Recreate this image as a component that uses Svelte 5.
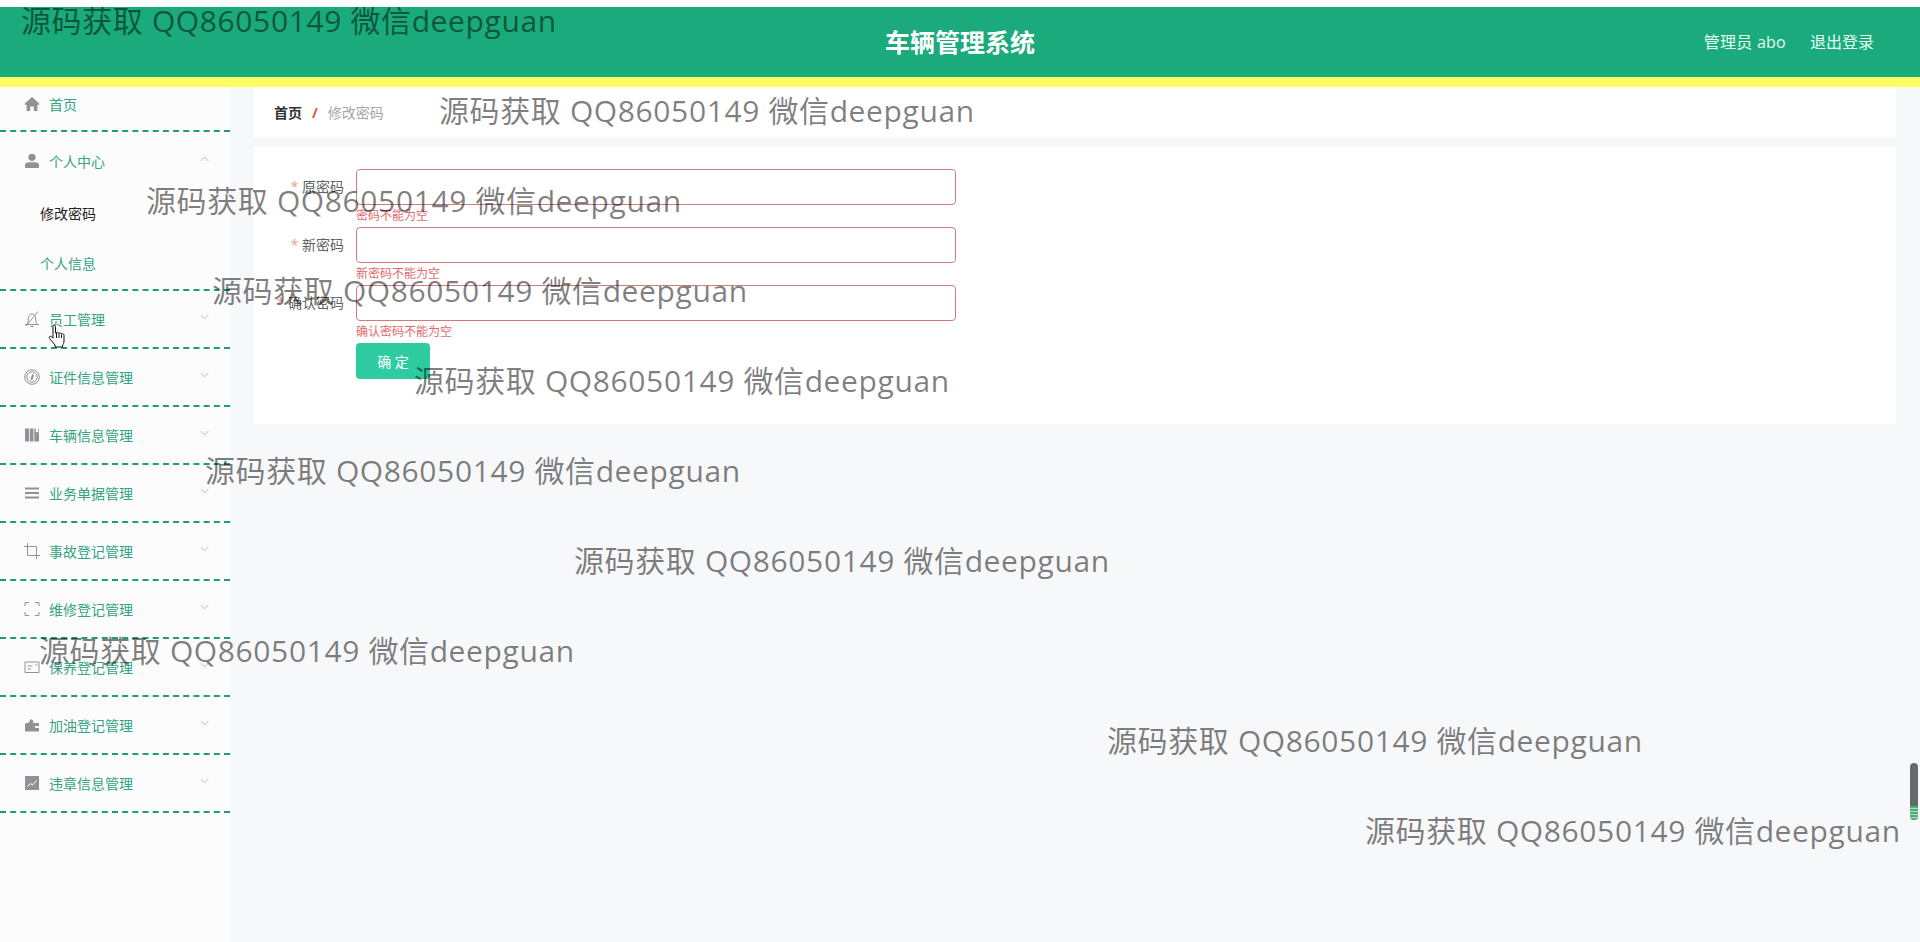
<script>
  const menu = [
    { label: '员工管理', icon: 'bell' },
    { label: '证件信息管理', icon: 'gauge' },
    { label: '车辆信息管理', icon: 'books' },
    { label: '业务单据管理', icon: 'lines' },
    { label: '事故登记管理', icon: 'crop' },
    { label: '维修登记管理', icon: 'full' },
    { label: '保养登记管理', icon: 'card' },
    { label: '加油登记管理', icon: 'wallet' },
    { label: '违章信息管理', icon: 'chart' }
  ];

  const fields = [
    { label: '原密码', error: '密码不能为空' },
    { label: '新密码', error: '新密码不能为空' },
    { label: '确认密码', error: '确认密码不能为空' }
  ];

  // where the overlay text is stamped on the page
  const marks = [
    [21, 0], [439, 90], [146, 180], [212, 270], [205, 450],
    [574, 540], [39, 630], [1107, 720], [1365, 810], [414, 360]
  ];
</script>

{#snippet icon(name)}
  <svg class="icon" viewBox="0 0 16 16" aria-hidden="true">
    {#if name === 'home'}
      <path class="fill" d="M8 1 .8 7.500v1.200h1.800V15h3.600v-4.400h3.600V15h3.600V8.700h1.800V7.500z" />
    {:else if name === 'user'}
      <circle class="fill" cx="8" cy="4.300" r="3.600" />
      <path class="fill" d="M1 15v-2.500C1 10.500 2.500 9.300 4.500 9.300h7c2 0 3.500 1.200 3.500 3.200V15z" />
    {:else if name === 'bell'}
      <path d="M1 13.500h14M3 13.500c1.300-1.500 1.200-3.300 1.200-5.500 0-2.500 1.500-5 3.800-5s3.800 2.500 3.800 5c0 2 0 4 1.200 5.500M2 15 14 .5M6.500 15.500h3" />
    {:else if name === 'gauge'}
      <circle cx="8" cy="8" r="7.300" />
      <circle cx="8" cy="8" r="5.200" />
      <path class="thick" d="M7.300 11 9.200 5.500" />
    {:else if name === 'books'}
      <path class="fill" d="M1 1.500h4v13H1zM5.800 1.500h3.700v13H5.800zM10.300 1.500h1.400v3.200l1.300.9 1.300-.9V1.500H15v13h-4.700z" />
    {:else if name === 'lines'}
      <path class="thick" d="M1 3.500h14M1 8h14M1 12.500h14" />
    {:else if name === 'crop'}
      <path d="M3.500 0v12.500H16M0 3.500h12.500V16" />
    {:else if name === 'full'}
      <path d="M1 5V1.500h4M11 1.500h4V5M15 11v3.500h-4M5 14.500H1V11" />
    {:else if name === 'card'}
      <path d="M1 3h14v10.500H1zM3.500 7h5M3.500 10h3.500M11.500 6h2" />
    {:else if name === 'wallet'}
      <path class="fill" d="M1 6.200 4.200 6 7 2l2.800 2.200-1 1.800H15v3h-4v2h4v3.500H1z" />
    {:else if name === 'chart'}
      <path class="fill" d="M1 1h14v14H1z" />
      <path class="on-fill" d="m3.500 11.500 3-3 2 1.500 4-4.500" />
    {/if}
  </svg>
{/snippet}

{#snippet caret(up)}
  <svg class="caret" viewBox="0 0 10 6" aria-hidden="true">
    <path d={up ? 'M1 5 5 1l4 4' : 'M1 1l4 4 4-4'} />
  </svg>
{/snippet}

<div class="page">
  <header class="topbar">
    <h1>车辆管理系统</h1>
    <div class="user">
      <span class="who">管理员 abo</span>
      <span>退出登录</span>
    </div>
  </header>

  <div class="layout">
    <aside class="sidebar">
      <div class="item first">
        <div class="title">{@render icon('home')}<span>首页</span></div>
      </div>
      <div class="item open">
        <div class="title">{@render icon('user')}<span>个人中心</span>{@render caret(true)}</div>
        <div class="sub active">修改密码</div>
        <div class="sub">个人信息</div>
      </div>
      {#each menu as m}
        <div class="item">
          <div class="title">{@render icon(m.icon)}<span>{m.label}</span>{@render caret(false)}</div>
        </div>
      {/each}
    </aside>

    <main class="content">
      <div class="crumbs">
        <span class="home">首页</span>
        <span class="sep">/</span>
        <span class="current">修改密码</span>
      </div>

      <form class="card" on:submit|preventDefault>
        {#each fields as f}
          <div class="row">
            <label><em>*</em> {f.label}</label>
            <div class="control">
              <input type="password" />
              <p class="error">{f.error}</p>
            </div>
          </div>
        {/each}
        <button type="submit">确 定</button>
      </form>
    </main>
  </div>

  {#each marks as [x, y]}
    <div class="mark" style="left:{x}px;top:{y}px">源码获取 QQ86050149 微信deepguan</div>
  {/each}

  <svg class="cursor" viewBox="0 0 18 24" aria-hidden="true">
    <path d="M5 2.500c0-1.800 2.500-1.800 2.500 0V9l1-.5c1-.5 2 0 2 .8l1-.3c1-.2 1.800.3 1.800 1l1-.2c1-.1 1.700.5 1.700 1.500V17c0 2-.7 3-1.500 4.500V23H7v-2L1.500 14.500c-1-1.500.7-3 2-1.800L5 14.200z" />
    <path d="M8.500 9v5M11 9.500V14M13.500 10.500V14" />
  </svg>

  <div class="scroll"><div class="scroll-end"></div></div>
</div>

<style>
  :global(body) {
    margin: 0;
    background: #fff;
  }

  .page {
    position: relative;
    height: 942px;
    overflow: hidden;
    padding-top: 7px;
    box-sizing: border-box;
    font-family: "Open Sans", "Noto Sans CJK SC", sans-serif;
    background: #f7f8fa;
    box-shadow: inset 0 7px 0 #fff;
  }

  .topbar {
    position: relative;
    display: flex;
    align-items: center;
    justify-content: flex-end;
    height: 68px;
    padding: 0 46px 2px 0;
    background: #1aaa7b;
    border-bottom: 10px solid #fdfd5f;
  }

  .topbar h1 {
    position: absolute;
    left: 0;
    right: 0;
    margin: 0;
    text-align: center;
    font-size: 25px;
    font-weight: 700;
    color: #fff;
  }

  .user {
    display: flex;
    gap: 24px;
    font-size: 16px;
    color: #e4fbf2;
  }

  .who {
    letter-spacing: 0.25px;
  }

  .layout {
    display: flex;
    height: 855px;
  }

  .sidebar {
    width: 230px;
    flex: none;
    background: #fcfcfc;
  }

  .item {
    border-bottom: 2px dashed #1f9c7a;
  }

  .item.first {
    height: 43px;
  }

  .item.open {
    padding-bottom: 1px;
  }

  .title {
    display: flex;
    align-items: center;
    height: 56px;
    padding-left: 24px;
    font-size: 14px;
    color: #35a384;
  }

  .first .title {
    height: 34px;
  }

  .open .title {
    height: 58px;
    margin-bottom: -2px;
  }

  .title span {
    margin-left: 9px;
  }

  .icon {
    width: 16px;
    height: 16px;
    flex: none;
    fill: none;
    stroke: #8f9299;
    stroke-width: 1;
  }

  .icon .fill {
    fill: #8f9299;
    stroke: none;
  }

  .icon .thick {
    stroke-width: 2;
  }

  .icon .on-fill {
    stroke: #fff;
    stroke-width: 1;
  }

  .caret {
    width: 9px;
    height: 6px;
    margin-left: auto;
    margin-right: 21px;
    margin-top: -5px;
    fill: none;
    stroke: #a9adb3;
    stroke-width: 1;
  }

  .sub {
    display: flex;
    align-items: center;
    height: 50px;
    padding-left: 40px;
    font-size: 14px;
    color: #35a384;
  }

  .sub.active {
    color: #222;
  }

  .content {
    flex: 1;
    min-width: 0;
    padding: 0 24px;
  }

  .crumbs {
    display: flex;
    align-items: center;
    height: 50px;
    padding-left: 20px;
    background: #fff;
    font-size: 14px;
  }

  .home {
    color: #303133;
    font-weight: 600;
  }

  .sep {
    margin: 0 10px;
    color: #d9552b;
    font-weight: 700;
  }

  .current {
    color: #a3a6ad;
  }

  .card {
    margin-top: 10px;
    height: 277px;
    padding-top: 22px;
    box-sizing: border-box;
    background: #fff;
  }

  .row {
    display: flex;
    height: 58px;
  }

  .row label {
    width: 90px;
    height: 36px;
    line-height: 36px;
    text-align: right;
    font-size: 14px;
    color: #606266;
  }

  .row em {
    font-style: normal;
    color: #f09a9a;
  }

  .control {
    margin-left: 12px;
  }

  input {
    display: block;
    width: 600px;
    height: 36px;
    box-sizing: border-box;
    border: 1px solid #d07a7e;
    border-radius: 4px;
    background: #fff;
    outline: none;
  }

  .error {
    margin: 4px 0 0;
    font-size: 12px;
    line-height: 14px;
    color: #e2686c;
  }

  button {
    display: block;
    margin: 0 0 0 102px;
    width: 74px;
    height: 36px;
    border: none;
    border-radius: 4px;
    background: #2dcb9f;
    color: #fff;
    font: inherit;
    font-size: 14px;
  }

  .mark {
    position: absolute;
    font-size: 30px;
    line-height: 42px;
    letter-spacing: 0.62px;
    white-space: nowrap;
    color: rgba(0, 0, 0, 0.5);
    pointer-events: none;
  }

  .cursor {
    position: absolute;
    left: 48px;
    top: 324px;
    width: 18px;
    height: 24px;
    fill: #fff;
    stroke: #111;
    stroke-width: 1;
  }

  .scroll {
    position: absolute;
    left: 1910px;
    top: 763px;
    width: 8px;
    height: 57px;
    border-radius: 4px;
    background: #66696a;
    overflow: hidden;
  }

  .scroll-end {
    position: absolute;
    left: 0;
    right: 0;
    bottom: 0;
    height: 14px;
    background: repeating-linear-gradient(#4cb07c 0 2px, #a9dcb8 2px 3px);
  }
</style>
